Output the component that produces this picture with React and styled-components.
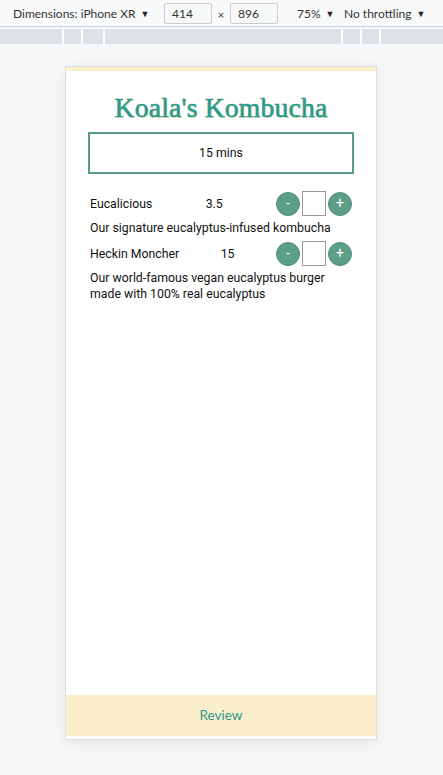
import React from "react";
import styled, { createGlobalStyle } from "styled-components";

const GlobalStyle = createGlobalStyle`
  html, body { margin: 0; padding: 0; }
  body {
    background: #f6f7f7;
    font-family: Roboto, "Liberation Sans", sans-serif;
    width: 443px;
    height: 775px;
    overflow: hidden;
  }
`;

const Toolbar = styled.div`
  height: 27px;
  background: #f9fafa;
  border-bottom: 1px solid #cdd0d4;
  display: flex;
  align-items: center;
  font-family: Lato, "Noto Sans", sans-serif;
  font-size: 12px;
  color: #333;
  box-sizing: border-box;
`;

const ToolItem = styled.div`
  display: flex;
  align-items: center;
  width: ${(p) => p.$w}px;
  padding-left: ${(p) => p.$pl || 0}px;
  box-sizing: border-box;
  white-space: nowrap;
`;

const Caret = styled.span`
  font-size: 9px;
  margin-left: 5px;
  color: #222;
`;

const DimInput = styled.div`
  width: 48px;
  height: 21px;
  box-sizing: border-box;
  border: 1px solid #cacdd1;
  background: #f7f8f8;
  border-radius: 2px;
  display: flex;
  align-items: center;
  padding-left: 7px;
  color: #333;
  font-size: 12px;
`;

const Times = styled.span`
  width: 18px;
  text-align: center;
  font-size: 12px;
  color: #444;
  padding-top: 3px;
`;

const Ruler = styled.div`
  margin-top: 2px;
  height: 15px;
  display: flex;
  gap: 2px;
  background: #ffffff;
`;

const RulerSeg = styled.div`
  background: #dee1e6;
  height: 100%;
  width: ${(p) => (p.$w ? `${p.$w}px` : "auto")};
  flex: ${(p) => (p.$w ? "none" : "1")};
`;

const Stage = styled.div`
  padding-top: 22px;
  padding-left: 65px;
`;

const Device = styled.div`
  width: 312px;
  height: 674px;
  box-sizing: border-box;
  border: 1px solid #dcdedf;
  background: #ffffff;
  box-shadow: 0 3px 14px rgba(0, 0, 0, 0.07);
  display: flex;
  flex-direction: column;
`;

const TopStrip = styled.div`
  height: 4px;
  background: #faeecb;
`;

const Title = styled.h1`
  margin: 22px 0 0;
  height: 30px;
  line-height: 30px;
  text-align: center;
  font-family: "Liberation Serif", "DejaVu Serif", serif;
  font-weight: normal;
  font-size: 27.5px;
  letter-spacing: 0.25px;
  color: #2a9b8d;
  -webkit-text-stroke: 0.6px #2a9b8d;
  text-shadow: 1px 1px 0 rgba(233, 196, 106, 0.55);
`;

const TimeBox = styled.div`
  margin: 9px 22px 0;
  height: 42px;
  box-sizing: border-box;
  border: 2px solid #579c88;
  display: flex;
  align-items: center;
  justify-content: center;
  font-size: 12.3px;
  color: #111;
`;

const Menu = styled.div`
  padding: 17px 24px 0;
  display: flex;
  flex-direction: column;
`;

const ItemRow = styled.div`
  height: 25px;
  display: flex;
  align-items: center;
  justify-content: space-between;
  font-size: 12.3px;
  color: #111;
`;

const Controls = styled.div`
  display: flex;
  align-items: center;
  gap: 2px;
`;

const RoundButton = styled.button`
  width: 24px;
  height: 24px;
  border-radius: 50%;
  border: 1px solid #4e8e7a;
  background: #5d9e8b;
  color: #fff;
  padding: 0 0 1px;
  display: flex;
  align-items: center;
  justify-content: center;
  font-family: Roboto, sans-serif;
  font-size: 14px;
  font-weight: normal;
  line-height: 1;
`;

const QtyBox = styled.div`
  width: 24px;
  height: 25px;
  box-sizing: border-box;
  border: 1px solid #9a9a9a;
  background: #fff;
`;

const Desc = styled.p`
  margin: 4px 0 5px;
  font-size: 12.3px;
  line-height: 16px;
  color: #111;
  width: 250px;
`;

const ReviewBar = styled.div`
  margin-top: auto;
  margin-bottom: 3px;
  height: 41px;
  background: #faeecb;
  display: flex;
  align-items: center;
  justify-content: center;
  padding-bottom: 2px;
  box-sizing: border-box;
  font-family: Lato, sans-serif;
  font-size: 13.5px;
  color: #2a9a8a;
`;

const items = [
  { name: "Eucalicious", price: "3.5", desc: "Our signature eucalyptus-infused kombucha" },
  { name: "Heckin Moncher", price: "15", desc: "Our world-famous vegan eucalyptus burger made with 100% real eucalyptus" },
];

export default function App() {
  return (
    <>
      <GlobalStyle />
      <Toolbar>
        <ToolItem $w={164} $pl={13}>
          Dimensions: iPhone XR<Caret>▼</Caret>
        </ToolItem>
        <ToolItem $w={133}>
          <DimInput>414</DimInput>
          <Times>×</Times>
          <DimInput>896</DimInput>
        </ToolItem>
        <ToolItem $w={47}>
          75%<Caret>▼</Caret>
        </ToolItem>
        <ToolItem $w={99}>
          No throttling<Caret>▼</Caret>
        </ToolItem>
      </Toolbar>
      <Ruler>
        <RulerSeg $w={62} />
        <RulerSeg $w={17} />
        <RulerSeg $w={20} />
        <RulerSeg $w={236} />
        <RulerSeg $w={17} />
        <RulerSeg $w={17} />
        <RulerSeg />
      </Ruler>
      <Stage>
        <Device>
          <TopStrip />
          <Title>Koala's Kombucha</Title>
          <TimeBox>15 mins</TimeBox>
          <Menu>
            {items.map((it) => (
              <React.Fragment key={it.name}>
                <ItemRow>
                  <span>{it.name}</span>
                  <span>{it.price}</span>
                  <Controls>
                    <RoundButton>-</RoundButton>
                    <QtyBox />
                    <RoundButton>+</RoundButton>
                  </Controls>
                </ItemRow>
                <Desc>{it.desc}</Desc>
              </React.Fragment>
            ))}
          </Menu>
          <ReviewBar>Review</ReviewBar>
        </Device>
      </Stage>
    </>
  );
}
